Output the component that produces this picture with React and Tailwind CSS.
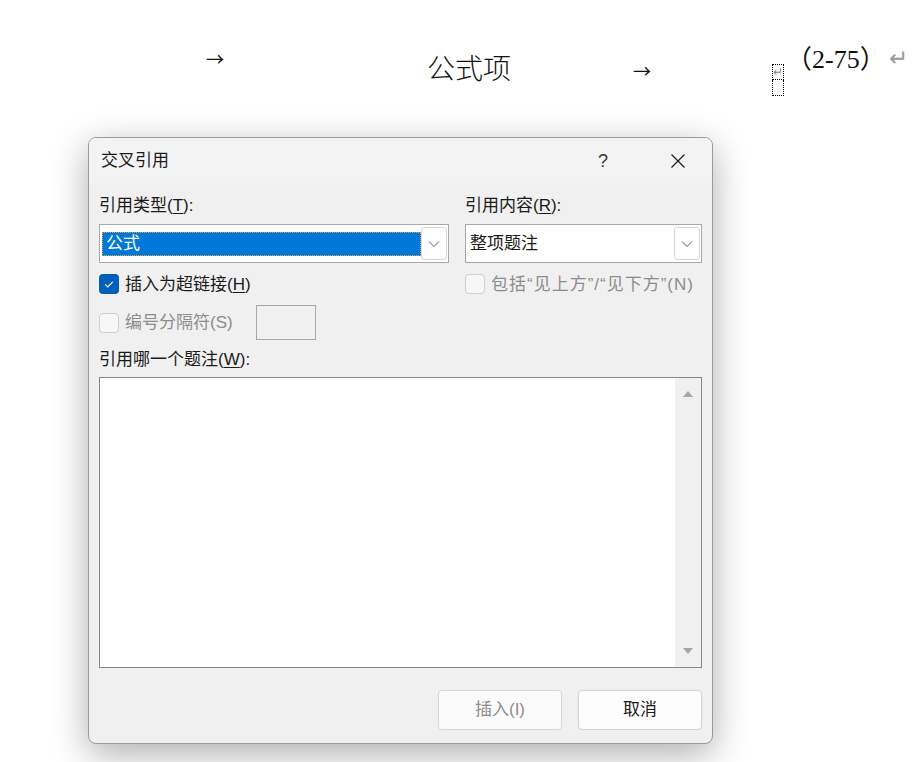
import React from "react";

const ui = "font-['Liberation_Sans','Noto_Sans_CJK_SC',sans-serif]";
const doc = "font-['Liberation_Serif','Noto_Sans_CJK_SC',serif]";
const cjk = "font-['Noto_Sans_CJK_SC',sans-serif]";

function Chevron() {
  return (
    <svg width="12" height="8" viewBox="0 0 12 8" fill="none">
      <path d="M1 1.5l5 5 5-5" stroke="#5a5a5a" strokeWidth="1" />
    </svg>
  );
}

function Checkbox({ checked, disabled }) {
  if (checked) {
    return (
      <span className="flex h-[20px] w-[20px] shrink-0 items-center justify-center rounded-[4px] bg-[#005fb8]">
        <svg width="20" height="20" viewBox="0 0 20 20" fill="none">
          <path d="M6.2 10.4l2.6 2.6 5-5.2" stroke="#ffffff" strokeWidth="1.1" />
        </svg>
      </span>
    );
  }
  return (
    <span
      className={
        "h-[20px] w-[20px] shrink-0 rounded-[4px] border " +
        (disabled ? "border-[#cfcfcf] bg-[#f7f7f7]" : "border-[#8a8a8a] bg-white")
      }
    />
  );
}

function Label({ children }) {
  return <div className="h-[20px] text-[17px] leading-[20px] text-[#1a1a1a]">{children}</div>;
}

function DropButton() {
  return (
    <span className="flex h-[33px] w-[26px] shrink-0 items-center justify-center rounded-[3px] border border-[#d6d6d6] bg-white">
      <Chevron />
    </span>
  );
}

function Triangle({ down }) {
  return (
    <svg width="12" height="8" viewBox="0 0 12 8">
      <polygon points={down ? "1,1 11,1 6,7" : "6,1 11,7 1,7"} fill="#a6a6a6" />
    </svg>
  );
}

export default function App() {
  return (
    <div className="relative h-[762px] w-[919px] overflow-hidden bg-white">
      {/* document line behind the dialog */}
      <div className={"flex h-[137px] items-start pl-[206px] text-[#111] " + doc}>
        <span className={"mt-[48px] w-[221px] text-[18px] leading-[20px] " + cjk}>→</span>
        <span className="mt-[56px] w-[206px] text-[28px] leading-[28px] font-light">公式项</span>
        <span className={"mt-[60px] w-[139px] text-[18px] leading-[20px] " + cjk}>→</span>
        <span className="mt-[64px] flex w-[14px] flex-col">
          <span className="flex h-[16px] w-[12px] items-center justify-center border border-dotted border-black text-[12px] leading-none text-[#888]">↵</span>
          <span className="h-[16px] w-[12px] border border-t-0 border-dotted border-black" />
        </span>
        <span className="mt-[45px] w-[103px] text-[26px] leading-[30px]">（2-75）</span>
        <span className="mt-[48px] text-[23px] leading-[22px] text-[#999]">↵</span>
      </div>

      {/* dialog */}
      <div
        className={
          "ml-[88px] flex h-[607px] w-[625px] flex-col overflow-hidden rounded-[8px] border border-[#9a9a9a] bg-[#f0f0f0] shadow-[0_10px_36px_rgba(0,0,0,0.32)] " +
          ui
        }
      >
        <div className="flex h-[45px] shrink-0 items-center bg-[#f3f3f3] pl-[12px] text-[#1a1a1a]">
          <span className="text-[17px] leading-none">交叉引用</span>
          <span className="ml-auto text-[18px] leading-none text-[#333]">?</span>
          <span className="ml-[62px] mr-[26px] flex h-[16px] w-[16px] items-center justify-center">
            <svg width="16" height="16" viewBox="0 0 16 16" fill="none">
              <path d="M1.5 1.5l13 13M14.5 1.5l-13 13" stroke="#1a1a1a" strokeWidth="1.2" />
            </svg>
          </span>
        </div>

        <div className="flex flex-1 flex-col px-[10px] pt-[13px]">
          <div className="flex gap-[16px]">
            <div className="flex w-[350px] flex-col">
              <Label>
                引用类型(<span className="underline underline-offset-2">T</span>):
              </Label>
              <div className="mt-[8px] flex h-[39px] items-center border border-[#a8a8a8] bg-white pl-[2px] pr-[1px]">
                <span className="flex h-[24px] flex-1 items-center border border-dotted border-[#e9a23b] bg-[#0078d7] pl-[3px] text-[17px] leading-none text-white">
                  公式
                </span>
                <DropButton />
              </div>
              <div className="mt-[11px] flex h-[20px] items-center gap-[6px]">
                <Checkbox checked />
                <span className="text-[17px] leading-none text-[#1a1a1a]">
                  插入为超链接(<span className="underline underline-offset-2">H</span>)
                </span>
              </div>
              <div className="mt-[11px] flex h-[35px] items-center">
                <Checkbox disabled />
                <span className="ml-[6px] w-[131px] text-[17px] leading-none text-[#8c8c8c]">编号分隔符(S)</span>
                <span className="h-[35px] w-[60px] border border-[#a8a8a8] bg-[#f0f0f0]" />
              </div>
            </div>

            <div className="flex w-[237px] flex-col">
              <Label>
                引用内容(<span className="underline underline-offset-2">R</span>):
              </Label>
              <div className="mt-[8px] flex h-[39px] items-center border border-[#a8a8a8] bg-white pl-[4px] pr-[1px]">
                <span className="flex-1 text-[17px] leading-none text-[#1a1a1a]">整项题注</span>
                <DropButton />
              </div>
              <div className="mt-[11px] flex h-[20px] items-center gap-[6px]">
                <Checkbox disabled />
                <span className="whitespace-nowrap text-[17px] leading-none tracking-[1px] text-[#8c8c8c]">包括“见上方”/“见下方”(N)</span>
              </div>
            </div>
          </div>

          <div className="mt-[10px]">
            <Label>
              引用哪一个题注(<span className="underline underline-offset-2">W</span>):
            </Label>
          </div>
          <div className="mt-[7px] flex h-[291px] border border-[#828790] bg-white">
            <div className="flex-1" />
            <div className="flex w-[26px] flex-col items-center justify-between bg-[#f0f0f0] py-[12px]">
              <Triangle />
              <Triangle down />
            </div>
          </div>

          <div className="mt-[22px] flex justify-end gap-[16px]">
            <button className="h-[40px] w-[124px] rounded-[4px] border border-[#d6d6d6] bg-[#fbfbfb] text-[17px] text-[#8c8c8c]">
              插入(I)
            </button>
            <button className="h-[40px] w-[124px] rounded-[4px] border border-[#d0d0d0] bg-[#fdfdfd] text-[17px] text-[#1a1a1a]">
              取消
            </button>
          </div>
        </div>
      </div>
    </div>
  );
}
